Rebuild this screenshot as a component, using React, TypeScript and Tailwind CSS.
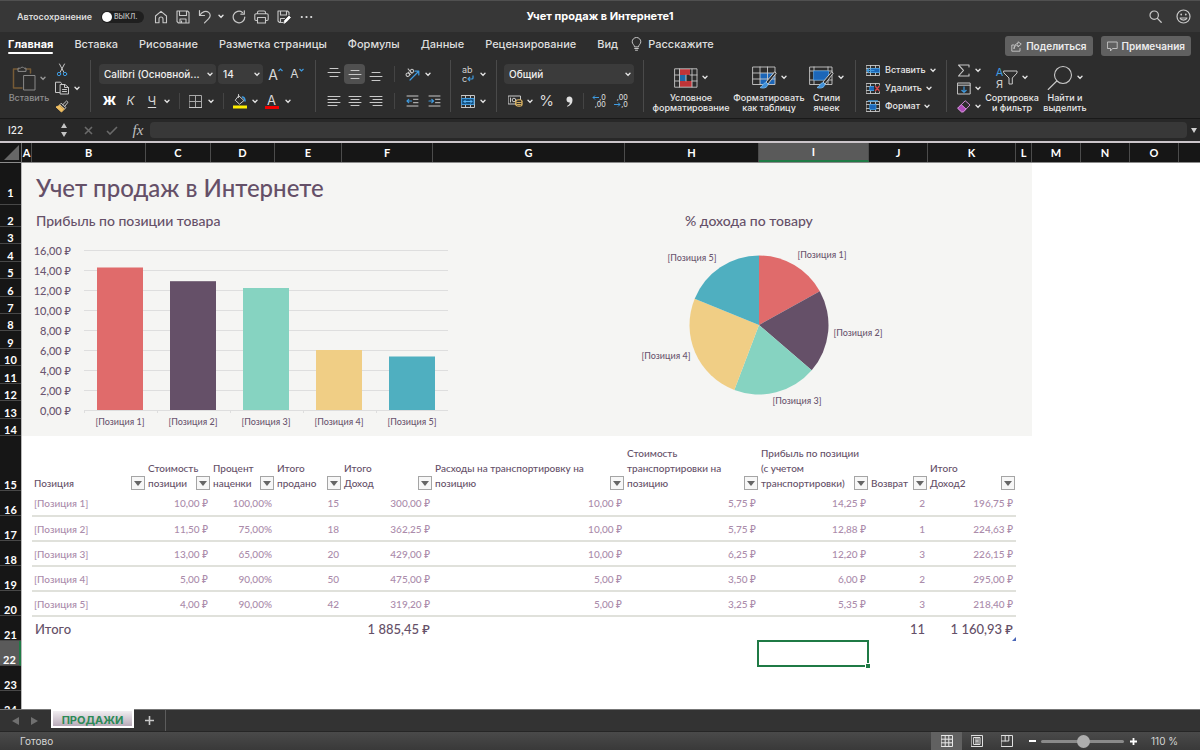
import React from 'react';
import type { ReactNode } from 'react';

/* ---------- data ---------- */

const TABS = ['Вставка', 'Рисование', 'Разметка страницы', 'Формулы', 'Данные', 'Рецензирование', 'Вид'];

const COLUMNS: { name: string; width: string }[] = [
  { name: 'A', width: 'w-[10px]' },
  { name: 'B', width: 'w-[114px]' },
  { name: 'C', width: 'w-[65px]' },
  { name: 'D', width: 'w-[64px]' },
  { name: 'E', width: 'w-[67px]' },
  { name: 'F', width: 'w-[91px]' },
  { name: 'G', width: 'w-[192px]' },
  { name: 'H', width: 'w-[134px]' },
  { name: 'I', width: 'w-[110px]' },
  { name: 'J', width: 'w-[59px]' },
  { name: 'K', width: 'w-[88px]' },
  { name: 'L', width: 'w-[16px]' },
  { name: 'M', width: 'w-[49px]' },
  { name: 'N', width: 'w-[49px]' },
  { name: 'O', width: 'w-[49px]' },
];

const HEADERS = [
  'Позиция',
  'Стоимость\nпозиции',
  'Процент\nнаценки',
  'Итого\nпродано',
  'Итого\nДоход',
  'Расходы на транспортировку на\nпозицию',
  'Стоимость\nтранспортировки на\nпозицию',
  'Прибыль по позиции\n(с учетом\nтранспортировки)',
  'Возврат',
  'Итого\nДоход2',
];

const ROWS = [
  ['[Позиция 1]', '10,00 ₽', '100,00%', '15', '300,00 ₽', '10,00 ₽', '5,75 ₽', '14,25 ₽', '2', '196,75 ₽'],
  ['[Позиция 2]', '11,50 ₽', '75,00%', '18', '362,25 ₽', '10,00 ₽', '5,75 ₽', '12,88 ₽', '1', '224,63 ₽'],
  ['[Позиция 3]', '13,00 ₽', '65,00%', '20', '429,00 ₽', '10,00 ₽', '6,25 ₽', '12,20 ₽', '3', '226,15 ₽'],
  ['[Позиция 4]', '5,00 ₽', '90,00%', '50', '475,00 ₽', '5,00 ₽', '3,50 ₽', '6,00 ₽', '2', '295,00 ₽'],
  ['[Позиция 5]', '4,00 ₽', '90,00%', '42', '319,20 ₽', '5,00 ₽', '3,25 ₽', '5,35 ₽', '3', '218,40 ₽'],
];

const TOTALS = ['Итого', '', '', '', '1 885,45 ₽', '', '', '', '11', '1 160,93 ₽'];

const SERIES = [
  { label: '[Позиция 1]', profit: 14.25, income: 196.75, color: '#e06b6b' },
  { label: '[Позиция 2]', profit: 12.88, income: 224.63, color: '#655068' },
  { label: '[Позиция 3]', profit: 12.2, income: 226.15, color: '#86d3c1' },
  { label: '[Позиция 4]', profit: 6.0, income: 295.0, color: '#f0ce85' },
  { label: '[Позиция 5]', profit: 5.35, income: 218.4, color: '#4fafc0' },
];

const SHEET_FONT = "font-['Lato','Noto_Sans',sans-serif]";

/* ---------- small parts ---------- */

function Svg({ w, h, children }: { w: number; h: number; children: ReactNode }) {
  return (
    <svg
      width={w}
      height={h}
      viewBox={`0 0 ${w} ${h}`}
      fill="none"
      stroke="#c8c8c8"
      strokeLinecap="round"
      strokeLinejoin="round"
      aria-hidden="true"
      className="shrink-0"
    >
      {children}
    </svg>
  );
}

function Chev() {
  return (
    <svg width="6" height="5" viewBox="0 0 6 5" fill="none" stroke="#e2e2e2" strokeWidth="1.4" strokeLinecap="round" strokeLinejoin="round" aria-hidden="true" className="shrink-0">
      <path d="M1 1.2 3 3.4 5 1.2" />
    </svg>
  );
}

function Btn({ label, className = '', children }: { label: string; className?: string; children: ReactNode }) {
  return (
    <button type="button" aria-label={label} className={`flex h-5 shrink-0 items-center justify-center ${className}`}>
      {children}
    </button>
  );
}

function Drop({ label, value, className }: { label: string; value: string; className: string }) {
  return (
    <div className={`relative flex h-5 items-center ${className}`}>
      <select aria-label={label} className="h-5 w-full appearance-none truncate rounded-sm bg-[#3b3b3b] pr-3 pl-[5px] text-[10px] font-medium text-[#efefef]">
        <option>{value}</option>
      </select>
      <span className="pointer-events-none absolute right-[3px]">
        <Chev />
      </span>
    </div>
  );
}

function Group({ className = '', children }: { className?: string; children: ReactNode }) {
  return <div className={`flex h-[52px] shrink-0 border-r border-[#4a4a4a] ${className}`}>{children}</div>;
}

function Sep() {
  return <span className="h-4 w-px shrink-0 bg-[#444]" />;
}

function Big({ title, className = '', children }: { title: string; className?: string; children: ReactNode }) {
  return (
    <button type="button" className={`flex shrink-0 flex-col items-center pt-[2px] ${className}`}>
      <span className="flex h-[31px] shrink-0 items-center gap-1">
        {children}
        <Chev />
      </span>
      <span className="text-center text-[9px] leading-[10px] font-medium whitespace-pre text-[#e8e8e8]">{title}</span>
    </button>
  );
}

const H_LINES: Record<string, string> = {
  top: 'M3 .5h8M1 4.5h12M3 8.5h8',
  middle: 'M3 2.5h8M1 6.5h12M3 10.5h8',
  bottom: 'M3 4.5h8M1 8.5h12M3 12.5h8',
  left: 'M1 1.5h12M1 4.5h9M1 7.5h12M1 10.5h9',
  center: 'M1 1.5h12M3 4.5h8M1 7.5h12M3 10.5h8',
  right: 'M1 1.5h12M4 4.5h9M1 7.5h12M4 10.5h9',
};

function Lines({ kind }: { kind: string }) {
  return (
    <Svg w={14} h={13}>
      <path d={H_LINES[kind]} strokeWidth="1" />
    </Svg>
  );
}

/* ---------- title bar ---------- */

function TitleBar() {
  return (
    <header className="relative flex h-8 shrink-0 items-center border-t border-[#505050] bg-[#373737] pr-[9px] pl-[17px]">
      <label htmlFor="autosave" className="w-[84px] text-[9px] font-semibold text-[#dadada]">
        Автосохранение
      </label>
      <span className="relative flex h-3 w-[43px] items-center rounded-full bg-[#1f1f1f]">
        <input id="autosave" type="checkbox" className="ml-px size-[10px] appearance-none rounded-full bg-white" />
        <span className="ml-[2px] text-[7px] leading-3 font-semibold text-[#b5b5b5]">ВЫКЛ.</span>
      </span>
      <div className="ml-[9px] flex items-center">
        <Btn label="Домой" className="w-4">
          <Svg w={14} h={14}>
            <path d="M1.5 6 7 1.3 12.5 6v6.7H9V9a2 2 0 0 0-4 0v3.7H1.5z" strokeWidth="1.1" />
          </Svg>
        </Btn>
        <Btn label="Сохранить" className="ml-[6px] w-4">
          <Svg w={14} h={14}>
            <path d="M1 1h10.5L13 2.5V13H2.5L1 11.5zM3.5 1v4.5h7V1M4 13V9h6v4M5.5 13v-2" strokeWidth="1.1" />
          </Svg>
        </Btn>
        <Btn label="Отменить" className="ml-[6px] w-4">
          <Svg w={14} h={15}>
            <path d="M1.5 1.5v5h5M1.8 6.2C4 2.5 8 1.2 10.7 3.4c2.3 2 1.6 4.6 0 6.2L6.5 13.8" strokeWidth="1.2" />
          </Svg>
        </Btn>
        <Btn label="Варианты отмены" className="ml-[2px] w-3">
          <Chev />
        </Btn>
        <Btn label="Повторить" className="ml-1 w-4">
          <Svg w={14} h={14}>
            <path d="M12.8 7A5.8 5.8 0 1 1 10.5 2.4M12.3.8v3.4H8.9" strokeWidth="1.2" />
          </Svg>
        </Btn>
        <Btn label="Печать" className="ml-[6px] w-4">
          <Svg w={15} h={14}>
            <path d="M3.5 3.5v-1A1.5 1.5 0 0 1 5 1h5a1.5 1.5 0 0 1 1.5 1.5v1M3.5 10.5H2A1.2 1.2 0 0 1 .8 9.3V5A1.3 1.3 0 0 1 2.1 3.7h10.8A1.3 1.3 0 0 1 14.2 5v4.3a1.2 1.2 0 0 1-1.2 1.2h-1.5M3.5 7.5h8V13h-8z" strokeWidth="1.1" />
          </Svg>
        </Btn>
        <Btn label="Сохранить как" className="ml-[7px] w-4">
          <Svg w={14} h={14}>
            <path d="M6 12.5H2.5L1 11V1h9.5L12 2.5V5M3.5 1v4h6V1M3.5 12.5v-4h4" strokeWidth="1.1" />
            <path d="m7 13 .6-2.5L12 6l1.5 1.5L9.2 12z" fill="#fff" stroke="#fff" strokeWidth=".8" />
          </Svg>
        </Btn>
        <Btn label="Ещё" className="ml-[6px] w-4">
          <Svg w={13} h={4}>
            <path d="M1.8 2h.01M6.5 2h.01M11.2 2h.01" strokeWidth="2.2" stroke="#e0e0e0" />
          </Svg>
        </Btn>
      </div>
      <h1 className="pointer-events-none absolute inset-x-0 text-center text-[11px] font-bold text-white">Учет продаж в Интернете1</h1>
      <div className="ml-auto flex items-center gap-3">
        <Btn label="Поиск" className="w-4">
          <Svg w={13} h={13}>
            <circle cx="5.2" cy="5.2" r="4.2" strokeWidth="1.2" />
            <path d="m8.4 8.4 3.8 3.8" strokeWidth="1.3" />
          </Svg>
        </Btn>
        <Btn label="Отзыв" className="w-4">
          <Svg w={15} h={15}>
            <circle cx="7.5" cy="7.5" r="6.5" strokeWidth="1.2" />
            <path d="M4 9c1 2.8 6 2.8 7 0z" strokeWidth="1.1" />
            <path d="M5.2 5.5h.01M9.8 5.5h.01" strokeWidth="1.8" />
          </Svg>
        </Btn>
      </div>
    </header>
  );
}

/* ---------- ribbon ---------- */

function RibbonTabs() {
  return (
    <div className="flex h-[28px] items-center pr-[9px] pl-2">
      <nav className="flex h-full items-center gap-[21px] text-[11px] font-semibold text-[#dedede]">
        <a href="#home" className="flex h-full flex-col pt-1 font-bold text-white">
          <span className="leading-4">Главная</span>
          <span className="h-[2px] rounded bg-white" />
        </a>
        {TABS.map((t) => (
          <a key={t} href="#tab" className="pb-1 leading-4 font-medium whitespace-nowrap">
            {t}
          </a>
        ))}
        <button type="button" className="-ml-2 flex items-center gap-[6px] pb-1 leading-4 font-medium">
          <Svg w={11} h={14}>
            <path d="M3.5 9.5C3.5 8 1.2 7 1.2 4.8a4.3 4.3 0 0 1 8.6 0C9.8 7 7.5 8 7.5 9.5zM3.7 11.5h3.6M4.5 13.2h2" />
          </Svg>
          Расскажите
        </button>
      </nav>
      <div className="ml-auto flex gap-2 text-[10px] font-semibold text-[#ececec]">
        <button type="button" className="flex h-5 items-center gap-1 rounded-[3px] bg-[#606060] px-[6px]">
          <Svg w={11} h={11}>
            <path d="M3 4H.8v6.2H9V7.5M3 7.5C3.3 5 5 4 7 4v2l3.3-3L7 .8v1.5C4.5 2.8 3 4.5 3 7.5" strokeWidth=".9" />
          </Svg>
          Поделиться
        </button>
        <button type="button" className="flex h-5 items-center gap-1 rounded-[3px] bg-[#606060] px-[6px]">
          <Svg w={11} h={11}>
            <path d="M.8 1h9.4v6.5H5.5L3.5 10V7.5H.8z" strokeWidth=".9" />
          </Svg>
          Примечания
        </button>
      </div>
    </div>
  );
}

function GridIcon({ children }: { children: ReactNode }) {
  return (
    <Svg w={14} h={13}>
      <path d="M.5 1.5h13v10H.5zM.5 4.5h13M.5 8.5h13M4.5 1.5v10M9.5 1.5v10" strokeWidth=".9" />
      {children}
    </Svg>
  );
}

function CellAction({ title, icon }: { title: string; icon: ReactNode }) {
  return (
    <button type="button" className="flex h-[18px] shrink-0 items-center">
      <span className="mr-[5px] flex">{icon}</span>
      <span className="mr-1 text-[9px] leading-3 font-medium text-[#e8e8e8]">{title}</span>
      <Chev />
    </button>
  );
}

function Ribbon() {
  return (
    <div className="flex h-[58px] items-start overflow-hidden">
      <Group className="w-[91px] pl-[9px]">
        <button type="button" className="flex w-10 flex-col items-center pt-1 opacity-60">
          <span className="flex h-7 shrink-0 items-center gap-1">
            <Svg w={24} h={26}>
              <path d="M6 4H1.5v19H10M14 4h4.5v4" stroke="#a87a3c" strokeWidth="1.5" />
              <path d="M6 6V3.2h2.5a2 2 0 0 1 3.5 0H14V6z" />
              <path d="M12 10.5h11V25H12z" />
            </Svg>
            <Chev />
          </span>
          <span className="text-[9px] leading-3 font-medium text-[#cfcfcf]">Вставить</span>
        </button>
        <div className="ml-[5px] flex flex-col pt-px">
          <Btn label="Вырезать" className="h-[18px] w-4">
            <Svg w={12} h={14}>
              <path d="M3.5 1 8 9.5M8.5 1 4 9.5" />
              <circle cx="3" cy="11" r="1.7" stroke="#3f9be0" />
              <circle cx="9" cy="11" r="1.7" stroke="#3f9be0" />
            </Svg>
          </Btn>
          <button type="button" aria-label="Копировать" className="flex h-[18px] shrink-0 items-center gap-1">
            <Svg w={16} h={14}>
              <path d="M5.5 11.5h-4V1.2h5l1 1.3" />
              <path d="M6.5 3.5H11l3.5 3V13h-8zM10.5 3.5v3h4M8.500 8.5h4M8.5 10.5h4" />
            </Svg>
            <Chev />
          </button>
          <Btn label="Формат по образцу" className="h-[18px] w-4">
            <Svg w={14} h={13}>
              <path d="M8 4.5 11.5 1 13 2.3 9.8 6.2" />
              <path d="m6.5 3.5 4.5 4L9.5 9 5 5z" />
              <path d="M4.5 5.500 1 7l5.500 5L9 9.500z" fill="#f0bf62" stroke="#f0bf62" />
            </Svg>
          </Btn>
        </div>
      </Group>

      <Group className="w-[225px] flex-col justify-between pt-1 pb-px pl-2">
        <div className="flex items-center">
          <Drop label="Шрифт" value="Calibri (Основной..." className="mr-[2px] w-[117px]" />
          <Drop label="Размер шрифта" value="14" className="mr-[2px] w-[45px]" />
          <Btn label="Увеличить размер шрифта" className="w-[21px] text-[14px] text-[#d8d8d8]">
            <span>A</span>
            <svg width="5" height="4" viewBox="0 0 5 4" fill="none" stroke="#3f9be0" strokeWidth="1.2" className="mb-2"><path d="M.5 3 2.5 1l2 2" /></svg>
          </Btn>
          <Btn label="Уменьшить размер шрифта" className="w-[22px] text-[12px] text-[#d8d8d8]">
            <span>A</span>
            <svg width="5" height="4" viewBox="0 0 5 4" fill="none" stroke="#3f9be0" strokeWidth="1.2" className="mb-2"><path d="M.5 1 2.5 3l2-2" /></svg>
          </Btn>
        </div>
        <div className="flex items-center text-[#d8d8d8]">
          <Btn label="Полужирный" className="w-[21px] text-[12px] font-extrabold text-white">Ж</Btn>
          <Btn label="Курсив" className="w-[21px] text-[12px] italic">К</Btn>
          <Btn label="Подчёркнутый" className="w-[22px] text-[12px] underline underline-offset-2">Ч</Btn>
          <Btn label="Вид подчёркивания" className="mr-2 w-2"><Chev /></Btn>
          <Sep />
          <Btn label="Границы" className="ml-1 w-[23px]">
            <Svg w={13} h={13}>
              <path d="M.5 .5h12v12H.5zM6.5.5v12M.5 6.5h12" strokeWidth="1" stroke="#a8a8a8" />
              <path d="M.5 12.5h12" />
            </Svg>
          </Btn>
          <Btn label="Вид границ" className="mr-2 w-2"><Chev /></Btn>
          <Sep />
          <Btn label="Цвет заливки" className="ml-[5px] w-[22px]">
            <Svg w={14} h={15}>
              <path d="M6 2 11 6.5 6.5 10.200 2.500 6.500zM5.500.5v3" />
              <path d="M9.5 3c2 .5 2.5 2 2.5 4" stroke="#3f9be0" strokeWidth="1.5" />
              <path d="M0 11.500h14v3H0z" fill="#ffee00" stroke="none" />
            </Svg>
          </Btn>
          <Btn label="Палитра заливки" className="w-2"><Chev /></Btn>
          <Btn label="Цвет текста" className="w-[25px] flex-col">
            <span className="text-[13px] leading-[12px]">A</span>
            <span className="h-[3px] w-[14px] bg-[#f00000]" />
          </Btn>
          <Btn label="Палитра текста" className="w-2"><Chev /></Btn>
        </div>
      </Group>

      <Group className="w-[135px] flex-col justify-between pt-1 pb-px pl-[7px]">
        <div className="flex items-center">
          <Btn label="По верхнему краю" className="w-[21px]"><Lines kind="top" /></Btn>
          <Btn label="По середине" className="w-[21px] rounded-sm bg-[#505050]"><Lines kind="middle" /></Btn>
          <Btn label="По нижнему краю" className="mr-[7px] w-[22px]"><Lines kind="bottom" /></Btn>
          <Sep />
          <Btn label="Ориентация" className="ml-[7px] w-5">
            <Svg w={15} h={14}>
              <path d="m5 13 8.500-8.500M13.800 8V4.200H10" stroke="#3f9be0" strokeWidth="1.2" />
              <g fill="#c8c8c8" stroke="none" transform="rotate(-42 4 6)">
                <circle cx="2" cy="6.5" r="1.7" fill="none" stroke="#c8c8c8" />
                <path d="M3.5 4.5h1v4h-1z" />
                <circle cx="7.5" cy="6.5" r="1.7" fill="none" stroke="#c8c8c8" />
                <path d="M5.500 2h1v6.500h-1z" />
              </g>
            </Svg>
          </Btn>
          <Btn label="Варианты ориентации" className="w-3"><Chev /></Btn>
        </div>
        <div className="flex items-center">
          <Btn label="По левому краю" className="w-[21px]"><Lines kind="left" /></Btn>
          <Btn label="По центру" className="w-[21px]"><Lines kind="center" /></Btn>
          <Btn label="По правому краю" className="mr-[7px] w-[22px]"><Lines kind="right" /></Btn>
          <Sep />
          <Btn label="Уменьшить отступ" className="ml-[7px] w-[20px]">
            <Svg w={13} h={12}>
              <path d="M1 1h11M7.5 4.3H12M7.5 7.7H12M1 11h11" />
              <path d="M5.5 6H1M2.7 4.3 1 6l1.7 1.7" stroke="#3f9be0" strokeWidth="1.2" />
            </Svg>
          </Btn>
          <Btn label="Увеличить отступ" className="w-6">
            <Svg w={13} h={12}>
              <path d="M1 1h11M7.5 4.3H12M7.5 7.7H12M1 11h11" />
              <path d="M1 6h4.5M3.8 4.3 5.5 6 3.8 7.7" stroke="#3f9be0" strokeWidth="1.2" />
            </Svg>
          </Btn>
        </div>
      </Group>

      <Group className="w-[46px] flex-col justify-between pt-1 pb-px pl-[6px]">
        <div className="flex items-center">
          <Btn label="Перенос текста" className="w-[22px]">
            <span className="flex flex-col text-left text-[9px] leading-[9px] text-[#d0d0d0]">
              <span>ab</span>
              <span className="flex items-center">
                c
                <svg width="7" height="7" viewBox="0 0 7 7" fill="none" stroke="#3f9be0" strokeWidth="1.2" aria-hidden="true"><path d="M6 .5V3q0 1-1 1H1M3 2 1 4l2 2" /></svg>
              </span>
            </span>
          </Btn>
          <Btn label="Варианты переноса" className="w-2"><Chev /></Btn>
        </div>
        <div className="flex items-center">
          <Btn label="Объединить" className="w-[22px]">
            <Svg w={14} h={13}>
              <path d="M.5.5h13v12H.5zM4.5.5V3M9.5.5V3M4.5 10v2.5M9.5 10v2.5" />
              <path d="M1 3.500h12v6H1z" fill="#15507f" stroke="#3f9be0" />
              <path d="M3 6.500h8M4.500 5 3 6.500 4.500 8M9.500 5 11 6.500 9.500 8" stroke="#5ab4f5" />
            </Svg>
          </Btn>
          <Btn label="Варианты объединения" className="w-2"><Chev /></Btn>
        </div>
      </Group>

      <Group className="w-[147px] flex-col justify-between pt-1 pb-px pl-[7px]">
        <Drop label="Формат чисел" value="Общий" className="w-[130px]" />
        <div className="flex items-center text-[#d8d8d8]">
          <Btn label="Денежный формат" className="w-[22px]">
            <Svg w={15} h={12}>
              <path d="M.5 1h12v8H.5z" />
              <circle cx="6" cy="5" r="1.8" />
              <path d="M2.5 3v4" />
              <path d="M8 5.5c1-1 5-1 6 0v5c-1 1-5 1-6 0z" fill="#2d2d2d" stroke="#efc36a" />
              <path d="M8 7c1.5 1 4.5 1 6 0M8 9c1.5 1 4.5 1 6 0" stroke="#efc36a" />
            </Svg>
          </Btn>
          <Btn label="Варианты валюты" className="w-2"><Chev /></Btn>
          <Btn label="Процентный формат" className="w-[25px] text-[15px]">%</Btn>
          <Btn label="Формат с разделителями" className="w-5">
            <svg width="7" height="11" viewBox="0 0 7 11" fill="#e0e0e0" aria-hidden="true"><path d="M3.3.5C5.300.5 6.500 2 6.500 4 6.500 7 5 9.500 1.500 10.700L1 10c1.800-1 2.700-2 2.900-3.500C2 6.800.5 5.500.5 3.500.5 1.800 1.600.5 3.300.5" /></svg>
          </Btn>
          <span className="flex items-center pl-1"><Sep /></span>
          <Btn label="Увеличить разрядность" className="ml-1 w-[22px]">
            <span className="flex flex-col text-right text-[7px] leading-[7px] font-medium">
              <span className="flex items-center"><svg width="7" height="5" viewBox="0 0 7 5" fill="none" stroke="#3f9be0" aria-hidden="true"><path d="M7 2.5H1M3 .5l-2 2 2 2" /></svg>,0</span>
              <span>,00</span>
            </span>
          </Btn>
          <Btn label="Уменьшить разрядность" className="w-[22px]">
            <span className="flex flex-col text-right text-[7px] leading-[7px] font-medium">
              <span>,00</span>
              <span className="flex items-center"><svg width="7" height="5" viewBox="0 0 7 5" fill="none" stroke="#3f9be0" aria-hidden="true"><path d="M0 2.5h6M4 .5l2 2-2 2" /></svg>,0</span>
            </span>
          </Btn>
        </div>
      </Group>

      <Group className="w-[212px] pl-2">
        <Big title={'Условное\nформатирование'} className="w-[78px]">
          <Svg w={24} h={20}>
            <path d="M5.5 1H16v6H5.500zM5.500 13H18v6H5.500z" fill="#c03438" stroke="none" />
            <path d="M5.500 7H12v6H5.500z" fill="#1d6aa8" stroke="none" />
            <path d="M1 .8h22v18.400H1zM1 7h4.500M16 7h7M1 13h4.500M18 13h5M5.500 1v18M18 1v18M12 7v6" strokeWidth=".9" />
          </Svg>
        </Big>
        <Big title={'Форматировать\nкак таблицу'} className="w-[78px]">
          <Svg w={25} h={23}>
            <path d="M8 7h15v11.500H8z" fill="#1c66b8" stroke="none" />
            <path d="M1 1h22v17.500H1zM1 7h22M1 13h22M8 1v17.500M15.500 1v17.500" strokeWidth=".9" />
            <path d="M24 7.500 16 18l-2-2L22.500 6z" fill="#2d2d2d" />
            <path d="M14 16.500c-3 0-3 4-6 5 3 1.300 7.500.5 8-3z" fill="#3f8fd8" stroke="#7cc0f5" strokeWidth=".8" />
          </Svg>
        </Big>
        <Big title={'Стили\nячеек'} className="w-[37px]">
          <Svg w={25} h={23}>
            <path d="M1 1h22v17.500H1zM1 5h22M1 14h22M5 1v17.500M19 1v17.500" strokeWidth=".9" />
            <path d="M5 5h14.500v9H5z" fill="#1c66b8" stroke="#3f8fd8" strokeWidth=".8" />
            <path d="M24 7.500 16 18l-2-2L22.500 6z" fill="#2d2d2d" />
            <path d="M14 16.500c-3 0-3 4-6 5 3 1.300 7.500.5 8-3z" fill="#3f8fd8" stroke="#7cc0f5" strokeWidth=".8" />
          </Svg>
        </Big>
      </Group>

      <Group className="w-[91px] flex-col pt-px pl-[10px]">
        <CellAction
          title="Вставить"
          icon={
            <GridIcon>
              <path d="M5 4.5h8.500v4H5z" fill="#1c66b8" stroke="#3f9be0" strokeWidth=".8" />
              <path d="M8 6.500H1M3 4.500l-2 2 2 2" stroke="#3f9be0" strokeWidth="1.2" />
            </GridIcon>
          }
        />
        <CellAction
          title="Удалить"
          icon={
            <GridIcon>
              <path d="M4 4.500h5.500v4H4z" fill="#1c66b8" stroke="#3f9be0" strokeWidth=".8" />
              <path d="M8 3.500h6v6H8z" fill="#2d2d2d" stroke="none" />
              <path d="m9.500 4.500 3.500 4M13 4.500l-3.500 4" stroke="#e0484c" strokeWidth="1.3" />
            </GridIcon>
          }
        />
        <CellAction
          title="Формат"
          icon={
            <GridIcon>
              <path d="M4 4.500h6v5H4z" fill="#1c66b8" stroke="#3f9be0" strokeWidth=".8" />
              <path d="M2.500.8h9" stroke="#3f9be0" strokeWidth="1.2" />
            </GridIcon>
          }
        />
      </Group>

      <div className="flex h-[52px] shrink-0 pl-[10px]">
        <div className="flex w-6 flex-col pt-px">
          <button type="button" aria-label="Сумма" className="flex h-[18px] shrink-0 items-center justify-between">
            <Svg w={14} h={13}>
              <path d="M12 3V1H1.500l5 5.300L1.500 12H12v-2" strokeWidth="1.1" />
            </Svg>
            <Chev />
          </button>
          <button type="button" aria-label="Заполнить" className="flex h-[18px] shrink-0 items-center justify-between">
            <Svg w={14} h={13}>
              <path d="M.8 1h12.400v11H.8zM.8 3.200h12.400" />
              <path d="M7 4.800v5.500M4.800 8.300 7 10.400l2.200-2.100" stroke="#3f9be0" strokeWidth="1.2" />
            </Svg>
            <Chev />
          </button>
          <button type="button" aria-label="Очистить" className="flex h-[18px] shrink-0 items-center justify-between">
            <Svg w={14} h={13}>
              <path d="M8.500 1 13 5 6.500 11.800H4.500L1 8.500z" stroke="#cf8bd6" />
              <path d="M4.500 4.800 9 9l-2.600 2.800H4.500L1 8.500z" fill="#b04cba" stroke="#cf8bd6" />
            </Svg>
            <Chev />
          </button>
        </div>
        <Big title={'Сортировка\nи фильтр'} className="w-[62px]">
          <span className="flex items-center">
            <span className="flex flex-col text-[11px] leading-[12px] text-[#d0d0d0]">
              <span className="text-[#3f9be0]">А</span>
              <span>Я</span>
            </span>
            <Svg w={15} h={15}>
              <path d="M1 1h13v2L9.300 8v6H6V8L1 3z" />
            </Svg>
          </span>
        </Big>
        <Big title={'Найти и\nвыделить'} className="w-[44px]">
          <Svg w={26} h={26}>
            <circle cx="16" cy="10" r="8.5" strokeWidth="1.1" />
            <path d="M9.800 16 1.200 24.500" strokeWidth="1.1" />
          </Svg>
        </Big>
      </div>
    </div>
  );
}

function FormulaBar() {
  return (
    <div className="flex h-[23px] shrink-0 items-center border-t border-[#191919] bg-[#282828]">
      <input aria-label="Имя ячейки" defaultValue="I22" className="h-full w-[60px] bg-transparent pl-2 text-[10px] font-medium text-[#ededed]" />
      <button type="button" aria-label="Выбрать имя" className="mr-[10px]">
        <svg width="8" height="16" viewBox="0 0 8 16" fill="#c4c4c4" aria-hidden="true"><path d="M4 1l3 5H1zM4 15l3-5H1z" /></svg>
      </button>
      <Btn label="Отменить ввод" className="ml-1 w-3">
        <svg width="9" height="9" viewBox="0 0 9 9" stroke="#6a6a6a" strokeWidth="1.6" aria-hidden="true"><path d="m1 1 7 7M8 1 1 8" /></svg>
      </Btn>
      <Btn label="Подтвердить ввод" className="ml-3 w-3">
        <svg width="12" height="9" viewBox="0 0 12 9" fill="none" stroke="#6a6a6a" strokeWidth="1.6" aria-hidden="true"><path d="m1 5 3 3 7-7" /></svg>
      </Btn>
      <Btn label="Вставить функцию" className="ml-3 w-4">
        <span className="font-['Liberation_Serif',serif] text-[15px] text-[#c0c0c0] italic">fx</span>
      </Btn>
      <input aria-label="Строка формул" className="ml-1 h-4 min-w-0 flex-1 rounded-sm bg-[#383838]" />
      <button type="button" aria-label="Развернуть строку формул" className="pr-[3px] pl-1">
        <svg width="6" height="5" viewBox="0 0 6 5" fill="#d0d0d0" aria-hidden="true"><path d="M0 0h6L3 5z" /></svg>
      </button>
    </div>
  );
}

/* ---------- sheet ---------- */

function ColumnHeads() {
  return (
    <div className={`flex h-[22px] shrink-0 overflow-hidden border-t-2 border-b border-t-[#cbc5ca] border-b-[#8b8b8b] bg-[#161616] text-[11px] font-bold text-white ${SHEET_FONT}`}>
      <span className="flex w-[22px] shrink-0 items-end justify-end border-r border-[#6a6a6a] pr-[2px] pb-[2px]">
        <svg width="15" height="15" viewBox="0 0 15 15" fill="#666" aria-hidden="true"><path d="M15 0v15H0z" /></svg>
      </span>
      {COLUMNS.map((c) => (
        <span
          key={c.name}
          className={`flex shrink-0 items-center justify-center border-r border-[#4c4c4c] pt-[2px] ${c.width} ${c.name === 'I' ? 'border-b-2 border-b-[#1f7a45] bg-[#5a5a5a]' : ''}`}
        >
          {c.name}
        </span>
      ))}
    </div>
  );
}

function RowHead({ n, className = '' }: { n: number; className?: string }) {
  return <span className={`flex items-end justify-center border-b border-[#484848] leading-[10px] ${className}`}>{n}</span>;
}

function RowHeads() {
  return (
    <div className={`flex w-[22px] shrink-0 flex-col border-r border-[#b9b9b9] bg-[#161616] text-[11px] font-bold text-white ${SHEET_FONT}`}>
      <RowHead n={1} className="h-[42px] pb-[6px]" />
      <RowHead n={2} className="h-[22px]" />
      <div className="grid h-[209px] grid-rows-12">
        {Array.from({ length: 12 }, (_, i) => (
          <RowHead key={i} n={i + 3} />
        ))}
      </div>
      <RowHead n={15} className="h-[55px]" />
      {[16, 17, 18, 19, 20, 21].map((n) => (
        <RowHead key={n} n={n} className="h-[25px]" />
      ))}
      <RowHead n={22} className="h-[25px] border-r-2 border-r-[#1f7a45] bg-[#5a5a5a]" />
      <RowHead n={23} className="h-[25px]" />
      <RowHead n={24} className="h-[25px]" />
    </div>
  );
}

function BarChart() {
  const base = 183;
  const ticks = [16, 14, 12, 10, 8, 6, 4, 2, 0];
  return (
    <svg width="440" height="209" viewBox="0 0 440 209" role="img" aria-label="Прибыль по позиции товара" className={SHEET_FONT}>
      {ticks.map((t) => (
        <g key={t}>
          <path d={`M62 ${base - t * 10 + 0.5}H426`} stroke="#dedede" />
          <text x="49" y={base - t * 10 + 5} textAnchor="end" fontSize="11" fontWeight="500" fill="#6b5570">{`${t},00 ₽`}</text>
        </g>
      ))}
      {SERIES.map((s, i) => (
        <g key={s.label}>
          <path d={`M${62.5 + i * 73} ${base}v3`} stroke="#dedede" />
          <rect x={75 + i * 73} y={base - s.profit * 10} width="46" height={s.profit * 10} fill={s.color} />
          <text x={98 + i * 73} y="198" textAnchor="middle" fontSize="9" fill="#6b5570">{s.label}</text>
        </g>
      ))}
    </svg>
  );
}

function PieChart() {
  const cx = 137;
  const cy = 98;
  const r = 69.5;
  const total = SERIES.reduce((a, s) => a + s.income, 0);
  const labels = [
    [200, 31],
    [236, 109],
    [175, 177],
    [44, 132],
    [70, 34],
  ];
  let acc = 0;
  return (
    <svg width="300" height="209" viewBox="0 0 300 209" role="img" aria-label="% дохода по товару" className={SHEET_FONT}>
      {SERIES.map((s, i) => {
        const a0 = (acc / total) * 2 * Math.PI;
        acc += s.income;
        const a1 = (acc / total) * 2 * Math.PI;
        const p = (a: number) => `${cx + r * Math.sin(a)} ${cy - r * Math.cos(a)}`;
        return (
          <g key={s.label}>
            <path d={`M${cx} ${cy}L${p(a0)}A${r} ${r} 0 0 1 ${p(a1)}z`} fill={s.color} />
            <text x={labels[i][0]} y={labels[i][1]} textAnchor="middle" fontSize="9" fill="#6b5570">{s.label}</text>
          </g>
        );
      })}
    </svg>
  );
}

function Banner() {
  return (
    <section className="flex h-[273px] w-[1010px] bg-[#f5f5f3] font-medium text-[#655068]">
      <div className="w-[600px]">
        <h2 className="flex h-[42px] items-center pt-2 pl-[14px] text-[24px] leading-8">Учет продаж в Интернете</h2>
        <h3 className="flex h-[22px] items-center pt-[10px] pl-[14px] text-[14px] leading-4">Прибыль по позиции товара</h3>
        <BarChart />
      </div>
      <div className="w-[300px] pt-[42px]">
        <h3 className="flex h-[22px] items-center pt-[10px] pl-[63px] text-[14px] leading-4">% дохода по товару</h3>
        <PieChart />
      </div>
    </section>
  );
}

function SalesTable() {
  return (
    <table className="ml-[10px] w-[984px] table-fixed border-collapse text-[10px] font-medium text-[#ab8cab]">
      <colgroup>
        {COLUMNS.slice(1, 11).map((c) => (
          <col key={c.name} className={c.width} />
        ))}
      </colgroup>
      <thead>
        <tr className="h-[55px] text-[#655068]">
          {HEADERS.map((h) => (
            <th key={h} scope="col" className="p-0 pl-[2px] align-bottom font-medium">
              <span className="flex items-end justify-between pr-px">
                <span className="text-left leading-[15px] whitespace-pre">{h}</span>
                <button type="button" aria-label="Фильтр" className="-ml-2 mb-px flex size-[14px] shrink-0 items-center justify-center border border-[#a5a5a5] bg-[#f7f7f7]">
                  <svg width="8" height="5" viewBox="0 0 8 5" fill="#666" aria-hidden="true"><path d="M0 0h8L4 5z" /></svg>
                </button>
              </span>
            </th>
          ))}
        </tr>
      </thead>
      <tbody>
        {ROWS.map((r) => (
          <tr key={r[0]} className="h-[25px] border-b-2 border-[#e0e1db]">
            {r.map((v, i) => (
              <td key={i} className={i === 0 ? 'p-0 pt-px pl-[2px]' : 'p-0 pt-px pr-[3px] text-right'}>
                {v}
              </td>
            ))}
          </tr>
        ))}
        <tr className="h-[25px] text-[13px] text-[#655068]">
          {TOTALS.map((v, i) => (
            <td key={i} className={i === 0 ? 'p-0 pt-px pl-[3px]' : 'relative p-0 pt-px pr-[3px] text-right'}>
              {v}
              {i === 9 && (
                <svg width="4" height="4" viewBox="0 0 4 4" fill="#4a66b8" aria-hidden="true" className="absolute right-0 bottom-0"><path d="M4 0v4H0z" /></svg>
              )}
            </td>
          ))}
        </tr>
        <tr className="h-[25px]">
          {TOTALS.map((_, i) => (
            <td key={i} className="relative p-0">
              {i === 7 && (
                <span className="absolute -inset-y-px right-0 -left-[2px] border-2 border-[#1f7a45]">
                  <span className="absolute -right-[3px] -bottom-[3px] size-[5px] border-t border-l border-white bg-[#1f7a45]" />
                </span>
              )}
            </td>
          ))}
        </tr>
      </tbody>
    </table>
  );
}

function Footer() {
  return (
    <footer className="shrink-0">
      <div className="flex h-[22px] border-t border-[#777] bg-[#333]">
        <div className="flex w-[51px] items-center gap-3 pl-3">
          <button type="button" aria-label="Предыдущий лист"><svg width="7" height="8" viewBox="0 0 7 8" fill="#707070" aria-hidden="true"><path d="M7 0v8L0 4z" /></svg></button>
          <button type="button" aria-label="Следующий лист"><svg width="7" height="8" viewBox="0 0 7 8" fill="#707070" aria-hidden="true"><path d="M0 0v8l7-4z" /></svg></button>
        </div>
        <button type="button" className="-mt-px flex h-[19px] w-[83px] items-center justify-center border-2 border-white bg-linear-to-b from-[#f1eef1] to-[#b9abb9] pt-1 text-[11px] font-bold text-[#2c8a57]">
          ПРОДАЖИ
        </button>
        <button type="button" aria-label="Новый лист" className="flex w-8 items-center justify-center border-r border-[#5c5c5c]">
          <svg width="9" height="9" viewBox="0 0 9 9" stroke="#c8c8c8" strokeWidth="1.6" aria-hidden="true"><path d="M4.5 0v9M0 4.5h9" /></svg>
        </button>
      </div>
      <div className="flex h-[19px] items-center border-t border-[#262626] bg-linear-to-b from-[#4a4a4a] to-[#393939] pr-[21px] pl-[20px] text-[10px] text-[#d6d6d6]">
        <span>Готово</span>
        <div className="ml-auto flex h-full items-center">
          <Btn label="Обычный" className="h-full w-[31px] bg-[#616161]">
            <Svg w={12} h={12}><path d="M.5.5h11v11H.5zM4.2.5v11M7.8.5v11M.5 4.2h11M.5 7.8h11" stroke="#e8e8e8" /></Svg>
          </Btn>
          <Btn label="Разметка страницы" className="w-[29px]">
            <Svg w={12} h={12}><path d="M.5.5h11v11H.5zM3 2.5h6v7H3zM5 2.5v7M7 2.5v7M5 6h2" stroke="#e0e0e0" /></Svg>
          </Btn>
          <Btn label="Страничный режим" className="w-[31px]">
            <Svg w={12} h={12}><path d="M.5.5h11v11H.5zM4.2.5V6M.5 6h7.300V.5" stroke="#e0e0e0" /></Svg>
          </Btn>
          <Btn label="Уменьшить" className="ml-[6px] w-2">
            <svg width="7" height="2" viewBox="0 0 7 2" fill="#fff" aria-hidden="true"><path d="M0 0h7v2H0z" /></svg>
          </Btn>
          <input
            type="range"
            aria-label="Масштаб"
            min={0}
            max={100}
            defaultValue={51}
            className="mx-[5px] h-[3px] w-[83px] appearance-none rounded bg-[#8a8a8a] [&::-webkit-slider-thumb]:size-[13px] [&::-webkit-slider-thumb]:appearance-none [&::-webkit-slider-thumb]:rounded-full [&::-webkit-slider-thumb]:bg-[#adadad]"
          />
          <Btn label="Увеличить" className="w-2">
            <svg width="7" height="7" viewBox="0 0 7 7" stroke="#fff" strokeWidth="1.8" aria-hidden="true"><path d="M3.5 0v7M0 3.5h7" /></svg>
          </Btn>
          <span className="ml-[14px] w-7 whitespace-nowrap">110 %</span>
        </div>
      </div>
    </footer>
  );
}

export default function App() {
  return (
    <div className="flex h-screen w-full flex-col overflow-hidden bg-white font-['Inter','Liberation_Sans',sans-serif]">
      <TitleBar />
      <div className="shrink-0 bg-[#2d2d2d]">
        <RibbonTabs />
        <Ribbon />
      </div>
      <FormulaBar />
      <ColumnHeads />
      <main className="flex min-h-0 flex-1 items-start overflow-hidden">
        <RowHeads />
        <div className={SHEET_FONT}>
          <Banner />
          <SalesTable />
        </div>
      </main>
      <Footer />
    </div>
  );
}
